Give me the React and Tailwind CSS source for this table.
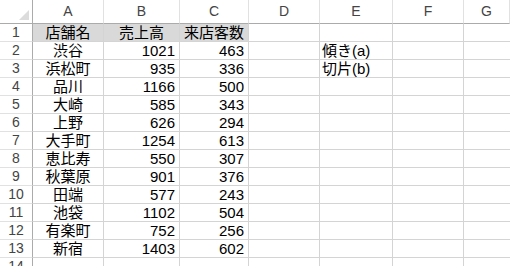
const rows = [
  ["店舗名", "売上高", "来店客数", "", ""],
  ["渋谷", "1021", "463", "", "傾き(a)"],
  ["浜松町", "935", "336", "", "切片(b)"],
  ["品川", "1166", "500", "", ""],
  ["大崎", "585", "343", "", ""],
  ["上野", "626", "294", "", ""],
  ["大手町", "1254", "613", "", ""],
  ["恵比寿", "550", "307", "", ""],
  ["秋葉原", "901", "376", "", ""],
  ["田端", "577", "243", "", ""],
  ["池袋", "1102", "504", "", ""],
  ["有楽町", "752", "256", "", ""],
  ["新宿", "1403", "602", "", ""],
  ["", "", "", "", ""],
];

const letters = ["A", "B", "C", "D", "E", "F", "G"];

export default function App() {
  return (
    <div
      className="w-[510px] h-[266px] overflow-hidden bg-white text-black"
      style={{ fontFamily: '"Liberation Sans", "Noto Sans CJK JP", sans-serif' }}
    >
      <div className="grid grid-cols-[33px_71px_76px_69px_71px_73px_71px_1fr]">
        {/* header row */}
        <div className="h-[24px] border-r border-b border-[#ababab] flex items-end justify-end pr-[3px] pb-[3px]">
          <svg width="10" height="10" viewBox="0 0 10 10">
            <polygon points="10,0 10,10 0,10" fill="#dcdcdc" />
          </svg>
        </div>
        {letters.map((l) => (
          <div
            key={l}
            className="h-[24px] border-r border-r-[#e1e1e1] border-b border-b-[#ababab] flex items-center justify-center text-[14px] text-[#444]"
          >
            {l}
          </div>
        ))}

        {rows.map((r, i) => (
          <Row key={i} n={i + 1} cells={r} />
        ))}
      </div>
    </div>
  );
}

function Row({ n, cells }) {
  const head = n === 1;
  return (
    <>
      <div className="h-[18px] border-r border-r-[#ababab] border-b border-b-[#e1e1e1] flex items-center justify-center text-[14px] text-[#444]">
        {n}
      </div>
      <div
        className={`h-[18px] border-r border-b border-[#d4d4d4] flex items-center justify-center text-[15px] leading-none ${
          head ? "bg-[#d9d9d9]" : ""
        }`}
      >
        {cells[0]}
      </div>
      <div
        className={`h-[18px] border-r border-b border-[#d4d4d4] flex items-center text-[15px] leading-none ${
          head ? "bg-[#d9d9d9] justify-center" : "justify-end pr-[4px]"
        }`}
      >
        {cells[1]}
      </div>
      <div
        className={`h-[18px] border-r border-b border-[#d4d4d4] flex items-center text-[15px] leading-none ${
          head ? "bg-[#d9d9d9] justify-center" : "justify-end pr-[4px]"
        }`}
      >
        {cells[2]}
      </div>
      <div className="h-[18px] border-r border-b border-[#d4d4d4]"></div>
      <div className="h-[18px] border-r border-b border-[#d4d4d4] flex items-center pl-[2px] text-[15px] leading-none whitespace-nowrap">
        {cells[4]}
      </div>
      <div className="h-[18px] border-r border-b border-[#d4d4d4]"></div>
      <div className="h-[18px] border-b border-[#d4d4d4]"></div>
    </>
  );
}
